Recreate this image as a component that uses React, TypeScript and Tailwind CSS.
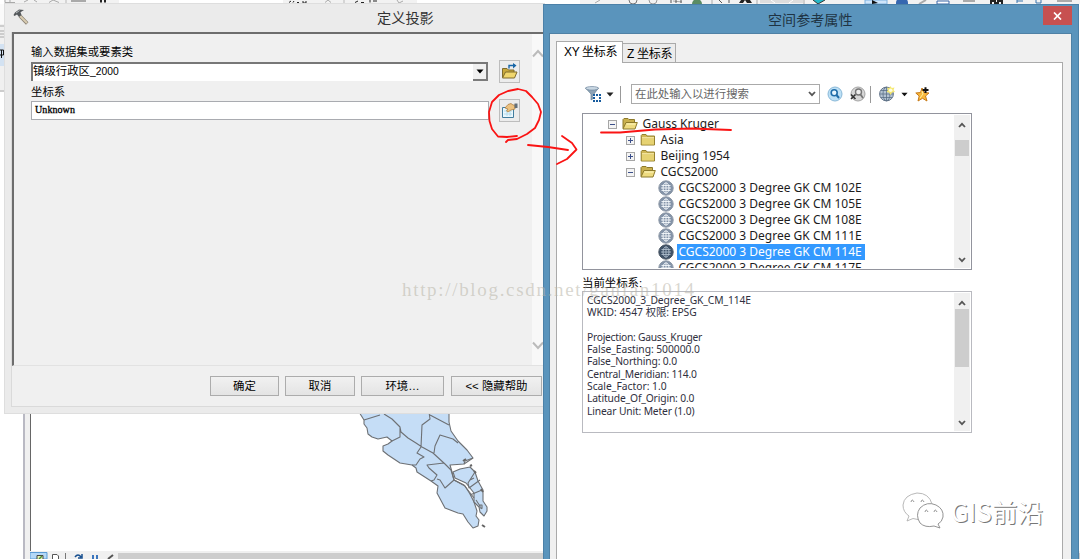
import React from "react";

const Expander = ({ open }: { open: boolean }) => (
  <svg width="9" height="9" viewBox="0 0 9 9" className="shrink-0">
    <rect x="0.5" y="0.5" width="8" height="8" fill="#f4f4f4" stroke="#a6a6a6" />
    <path d={open ? "M2 4.5H7" : "M2 4.5H7M4.5 2V7"} stroke="#3b4f8a" />
  </svg>
);

const Folder = ({ open }: { open: boolean }) => (
  <svg width="16" height="14" viewBox="0 0 16 14" className="shrink-0">
    {open ? (
      <>
        <path d="M1 11.5V2.5L2 1.5H6L7 2.5H12.5V5" fill="#c9b04e" stroke="#8d7a2c" />
        <path d="M1 12L4 5.5H15.3L13 12Z" fill="#eedb80" stroke="#8d7a2c" />
        <path d="M4.5 7H13.5" stroke="#fff7c0" />
      </>
    ) : (
      <>
        <path d="M1.2 12V2.5L2 1.5H6L7 3H14.5V12Z" fill="#cfb654" stroke="#95812f" />
        <path d="M2 5.5H14V11.5H2Z" fill="#e6d272" />
        <path d="M2 4.8H14" stroke="#fff6ba" />
      </>
    )}
  </svg>
);

const Globe = ({ dark }: { dark?: boolean }) => (
  <svg width="16" height="16" viewBox="0 0 16 16" className="shrink-0">
    <circle cx="8" cy="8" r="7.2" fill={dark ? "#3f5268" : "#8393a8"} stroke={dark ? "#4a5663" : "#8d98a6"} />
    <ellipse cx="8" cy="8" rx="3" ry="5.2" fill="none" stroke={dark ? "#aebccb" : "#f3f7fb"} />
    <path d="M8 3V13M3.5 5.5H12.5M3 8H13M3.5 10.5H12.5" stroke={dark ? "#aebccb" : "#f3f7fb"} strokeWidth="0.9" />
  </svg>
);

const Chevron = ({ up }: { up?: boolean }) => (
  <svg width="8" height="6" viewBox="0 0 8 6">
    <path d={up ? "M1 5L4 1.8L7 5" : "M1 1L4 4.2L7 1"} fill="none" stroke="#555" strokeWidth="1.8" />
  </svg>
);

const PushButton = ({ className, children }: { className: string; children: React.ReactNode }) => (
  <button
    className={`h-[20px] shrink-0 border border-[#acacac] bg-linear-to-b from-[#f1f1f1] to-[#e4e4e4] text-center text-[11.4px] leading-[18px] ${className}`}
  >
    {children}
  </button>
);

const names = ["102E", "105E", "108E", "111E", "114E", "117E"];

const Desktop = () => (
  <div className="flex h-full w-full flex-col bg-white">
    <svg width="1080" height="4" viewBox="0 0 1080 4" className="block shrink-0 bg-[#f2f2f2]">
      <path d="M0 0H4V4H0Z" fill="#fff" />
      <path d="M5 0V2.5H15M10 0V2M24 2L28 0M34 0L37 2M49 2.5L53 0L59 2.5" stroke="#a9a9a9" fill="none" />
      <path d="M71 1H86" stroke="#aaa" strokeWidth="2" />
      <path d="M66 0V3M344 0V3" stroke="#b8b8b8" />
      <path d="M101 0V2.5M105 0V2.5" stroke="#222" strokeWidth="2" />
      <path d="M119 0H283V4H119ZM417 0H580V4H417Z" fill="#fff" />
      <path d="M289 2.5L291 1M293 2.5L294 1M297 2.5H299M303 1V3H306V1M355 2.5L358 1M361 2.5H364M370 2.5V0M374 2V0M376 2V0" stroke="#222" fill="none" />
      <path d="M325 2.5L328 0L331 2.5M397 0L399 3L403 1" stroke="#aaa" fill="none" />
      <path d="M595 3L600 0M673 1L682 2" stroke="#aaa" fill="none" />
      <circle cx="633" cy="0" r="4" fill="none" stroke="#777" />
      <circle cx="653" cy="0" r="4" fill="none" stroke="#999" />
      <path d="M671 3V0M676 3V0M681 3V0M719 0L722 3M729 3V0" stroke="#555" />
      <circle cx="697" cy="4" r="5" fill="#5b8c63" />
      <path d="M712 0V4M757 0V4M804 0V4" stroke="#aaa" />
      <path d="M739 3L741 0H750L752 3H747L745 0L743 3Z" fill="#222" />
      <path d="M760 0H803V3H760Z" fill="#ddd" />
      <path d="M771 0L775 3M793 0L789 3" stroke="#fff" />
      <path d="M813 0L818 4L825 0" fill="#25b8c7" stroke="#333" />
      <path d="M865 0H887V4H865Z" fill="#cfe5fa" stroke="#7db2e0" />
      <path d="M872 0V4L878 3Z" fill="#111" />
      <circle cx="902" cy="3" r="6" fill="#3667b0" />
      <path d="M937 1H949V4H937Z" fill="#fff" stroke="#3a66a8" />
      <path d="M919 4L926 0M963 1H975" stroke="#aaa" strokeWidth="2" />
      <path d="M991 4V1H995V3H998V1H1002V4" stroke="#222" strokeWidth="2" fill="none" />
      <path d="M1017 1H1023M1017 0V3M1036 0V3H1041V0" stroke="#3974ad" fill="none" />
      <path d="M1057 1H1072" stroke="#aaa" strokeWidth="2" />
    </svg>
    <div className="flex min-h-0 flex-1">
      <div className="flex w-[23px] flex-col">
        <svg width="4" height="88" viewBox="0 0 4 88" className="block">
          <rect width="4" height="88" fill="#f0f0f0" />
          <path d="M0 0H4V20H0Z" fill="#fafafa" />
          <path d="M0 22H4M0 27H4M0 30H4M0 33H4M0 87H4" stroke="#aaa" />
          <rect y="40" width="4" height="22" fill="#d3e2f2" />
          <path d="M0 46H3.5V51H0M1.5 46V54" stroke="#111" fill="none" />
        </svg>
      </div>
      <div className="w-[2px] bg-[#b9b9c3]" />
      <div className="w-[5px] bg-[#f0f0f0]" />
      <div className="flex flex-1 flex-col">
        <div className="flex flex-1 border-l border-[#666]">
          <svg width="200" height="180" viewBox="330 370 200 180" className="mt-[366px] ml-[299px] block">
            <g fill="#c5ddf6" stroke="#6d7074" strokeWidth="1.1" strokeLinejoin="round">
              <path d="M359 412L364 420L364 424L367 428L368 434L372 437L378 439L387 437L392 441L388 444L383 446L383 451L388 455L400 463L412 465L416 468L417 472L431 481L438 486L437 493L445 508L458 513L463 514L468 522L473 528L478 526L479 520L476 516L477 511L474 502L470 494L465 486L454 480L452 472L450 465L464 464L465 461L473 458L467 450L458 441L451 431L449 422L449 412Z" />
              <path d="M453 472L460 469L470 467L475 472L478 481L483 490L483 501L487 507L487 511L484 516L480 512L479 507L474 502L474 493L466 483L455 478Z" />
              <path d="M364 420L380 415M384 414L392 419L400 427L401 432L408 438L416 443L422 447L433 453L445 464L451 470L454 480M400 427L400 437L392 441M429 412L430 419L422 425L421 447L417 453L424 457L420 459L416 465L412 465M430 415L449 425M434 453L435 446L440 435L453 439L458 443M444 463L427 465L429 468L437 475L434 480L431 481M437 479L440 480L445 488L454 480M475 472L468 483L469 488L480 480M470 495L482 490M470 480L474 478M476 500L482 509M464 464L473 458M454 480L464 485L474 498" fill="none" />
              <path d="M480 505H482V508H480Z" />
            </g>
            <path d="M463 461L466 459M470 466L472 465M474 471L476 473M482 525L485 527M481 489L483 492" stroke="#666" strokeWidth="2" />
          </svg>
        </div>
        <svg width="1050" height="8" viewBox="0 0 1050 8" className="block shrink-0">
          <rect width="1050" height="8" fill="#f0f0f0" />
          <rect x="88" y="2" width="962" height="6" fill="#cdcdcd" />
          <path d="M0 1.500H17V8H0Z" fill="#b4d8f7" stroke="#5b9bd5" />
          <path d="M7 8V4.500H13V8" fill="#e9f2b0" stroke="#444" />
          <path d="M9 8L12 5" stroke="#4a8f3c" strokeWidth="1.500" />
          <path d="M22.500 8V3.500H27L28.500 5V8" fill="#fff" stroke="#555" />
          <path d="M35.500 2V8" stroke="#777" />
          <path d="M45 6Q48 2 51 6M52 3V7H48" stroke="#174f8f" strokeWidth="1.500" fill="none" />
          <path d="M63 4V8M67 4V8" stroke="#3a75bd" strokeWidth="2" />
          <path d="M78 8L83 4" stroke="#555" strokeWidth="2" />
        </svg>
      </div>
    </div>
  </div>
);

const DefineProjection = () => (
  <section className="absolute top-[3px] left-[4px] flex h-[411px] w-[541px] flex-col border border-[#dedede] bg-[#ebebeb]">
    <header className="flex h-[28px] shrink-0 items-center">
      <svg width="18" height="18" viewBox="0 0 18 18" className="-mt-[2px] ml-[7px] shrink-0">
        <path d="M8 8L15.200 15.500" stroke="#8a8274" strokeWidth="3.400" />
        <path d="M8 8L15 15" stroke="#d9ccb0" strokeWidth="2" />
        <path d="M1.500 7L3 4.500L7 1.500L12 2L8.500 4.200L9.500 7L7 9L5 6.500L2.500 8Z" fill="#54585b" />
        <path d="M4 5L7.500 2.600" stroke="#b3b8bb" />
      </svg>
      <h1 className="ml-[347px] text-[14.2px] leading-[20px] text-[#333]">定义投影</h1>
    </header>
    <div className="ml-[6px] flex h-[375px] shrink-0 flex-col border-b border-l border-[#dadada] bg-[#f0f0f0]">
      <div className="flex h-[334px] border-t-2 border-b border-l-2 border-t-[#6d6d6d] border-b-[#e2e2e2] border-l-[#6d6d6d]">
        <div className="flex w-[518px] shrink-0 flex-col pl-[17px]">
          <label className="mt-[10px] text-[11.35px] leading-[16px]">输入数据集或要素类</label>
          <div className="mt-[2px] flex items-center">
            <div className="flex h-[19px] w-[457px] justify-between border-t-2 border-l-2 border-[#777] bg-white">
              <span className="text-[11.4px] leading-[14px]">
                镇级行政区<span className="text-[10.3px]">_2000</span>
              </span>
              <span className="flex h-[17px] w-[15px] items-center justify-center border-r-2 border-b-2 border-[#7b7b7b] bg-[#f0f0f0]">
                <svg width="8" height="5" viewBox="0 0 8 5">
                  <path d="M0.500 0.500H7.500L4 4.500Z" fill="#000" />
                </svg>
              </span>
            </div>
            <span className="-my-[2px] ml-[11px] flex h-[23px] w-[21px] items-center justify-center border border-[#bdbdbd] bg-[#ececec]">
              <svg width="17" height="17" viewBox="0 0 17 17">
                <path d="M1.500 14.500V5.500H6L7.500 7H13V10" fill="#c9a93b" stroke="#7f6b2c" />
                <path d="M1.500 15L4.500 9H16L13.500 15Z" fill="#f0d66d" stroke="#7f6b2c" />
                <path d="M8 5.500V2.500H14" fill="none" stroke="#1765a6" strokeWidth="1.400" />
                <path d="M12 0L15.500 2.500L12 5.500Z" fill="#1765a6" />
              </svg>
            </span>
          </div>
          <label className="mt-[3px] text-[11.4px] leading-[16px]">坐标系</label>
          <div className="mt-[1px] flex items-center">
            <div className="h-[19px] w-[458px] border border-[#a9abb0] bg-white pl-[3px] font-[Liberation_Serif,serif] text-[10px] leading-[16px] tracking-[0.08px] [-webkit-text-stroke:0.3px_#000]">
              Unknown
            </div>
            <span className="-my-[2px] ml-[10px] flex h-[23px] w-[21px] items-center justify-center border border-[#bdbdbd] bg-[#ececec]">
              <svg width="17" height="17" viewBox="0 0 17 17">
                <path d="M1.500 5.500H12.500V15.500H1.500Z" fill="#eaf7fd" stroke="#427d9e" />
                <path d="M3 9H11M3 12H11M6 7V14M9 7V14" stroke="#b4dcec" />
                <path d="M4 6L7 2.500L10 1.500L12 3H14V7L10 8L7 10L5.500 9L7 7Z" fill="#edc27f" stroke="#a87539" strokeWidth="0.700" />
                <path d="M13.500 1.500H16.500V6H13.500Z" fill="#64707a" />
              </svg>
            </span>
          </div>
        </div>
        <div className="flex flex-1 flex-col items-end justify-between bg-[#f8f8f8] pt-[15px] pb-[15px]">
          <svg width="12" height="9" viewBox="0 0 12 9">
            <path d="M1 7.500L6 2L11 7.500" fill="none" stroke="#bbb" strokeWidth="2" />
          </svg>
          <svg width="12" height="9" viewBox="0 0 12 9">
            <path d="M1 1.500L6 7L11 1.500" fill="none" stroke="#bbb" strokeWidth="2" />
          </svg>
        </div>
      </div>
      <div className="flex pt-[10px] pl-[198px]">
        <PushButton className="w-[69px]">确定</PushButton>
        <PushButton className="ml-[6px] w-[70px]">取消</PushButton>
        <PushButton className="ml-[6px] w-[83px]">环境…</PushButton>
        <PushButton className="ml-[7px] w-[91px]">&lt;&lt; 隐藏帮助</PushButton>
      </div>
    </div>
  </section>
);

const TreeRow = ({ level, label, open }: { level: string; label: string; open: boolean }) => (
  <div className={`flex h-[16px] items-center ${level}`}>
    <Expander open={open} />
    <span className="ml-[5px] flex">
      <Folder open={open} />
    </span>
    <span className="ml-[4.500px] leading-[16px]">{label}</span>
  </div>
);

const ScrollBar = ({ top, thumb }: { top: string; thumb: string }) => (
  <div className="flex w-[16px] shrink-0 flex-col items-center bg-[#f0f0f0] pt-[7px] pb-[5px]">
    <Chevron up />
    <div className={`w-[14px] bg-[#cdcdcd] ${top} ${thumb}`} />
    <div className="flex-1" />
    <Chevron />
  </div>
);

const SpatialReference = () => (
  <section className="absolute top-[4px] left-[543px] flex h-[555px] w-[536px] flex-col overflow-hidden border-t border-r border-l border-[#4c81a8] bg-[#5a94bc] pr-[6px] pl-[5px]">
    <header className="flex h-[28px] shrink-0">
      <h2 className="ml-[219px] pt-[5px] text-[14.1px] leading-[20px] text-[#1f3444]">空间参考属性</h2>
      <span className="mt-[1px] mr-0 ml-auto flex h-[19px] w-[29px] items-center justify-center bg-[#c75050]">
        <svg width="9" height="8" viewBox="0 0 9 8">
          <path d="M1 0.500L8 7.500M8 0.500L1 7.500" stroke="#fff" strokeWidth="1.700" />
        </svg>
      </span>
    </header>
    <div className="flex flex-1 flex-col border border-b-0 border-[#4f81a5] bg-[#f0f0f0] pr-[8px] pl-[6px]">
      <div className="z-10 flex h-[28px] shrink-0 items-end">
        <div className="-mb-px h-[22px] w-[67px] border border-b-0 border-[#aaa] bg-white pl-[7px] text-[12px] leading-[20px] tracking-[-0.35px]">
          XY 坐标系
        </div>
        <div className="h-[19px] w-[53px] border border-b-0 border-l-0 border-[#aaa] bg-[#ececec] pl-[4px] text-[12px] leading-[20px] tracking-[-0.3px]">
          Z 坐标系
        </div>
      </div>
      <div className="flex flex-1 flex-col border border-b-0 border-[#aaa] bg-white pl-[25px]">
        <div className="mt-[21px] flex h-[20px] items-center">
          <svg width="17" height="17" viewBox="0 0 17 17" className="ml-[3px]">
            <path d="M0.500 2L6 8V14L9 12V8L13.500 2Z" fill="#8ea3b6" stroke="#667f95" strokeWidth="0.700" />
            <ellipse cx="7" cy="2.300" rx="6.500" ry="1.800" fill="#c9d7e2" stroke="#728aa0" strokeWidth="0.700" />
            <path d="M8 8H16V16H8Z" fill="#fff" />
            <path d="M8 8H10V10H8ZM11 8H13V10H11ZM14 8H16V10H14ZM8 11H10V13H8ZM14 11H16V13H14ZM8 14H10V16H8ZM11 14H13V16H11ZM14 14H16V16H14Z" fill="#165b9e" />
          </svg>
          <svg width="8" height="5" viewBox="0 0 8 5" className="ml-[4px]">
            <path d="M0.500 0.500H7.500L4 4.500Z" fill="#222" />
          </svg>
          <div className="ml-[6px] h-[17px] w-px bg-[#999]" />
          <div className="ml-[10px] flex h-[20px] w-[189px] items-center justify-between border border-[#aaa] pr-[3px] pl-[3px] text-[11.4px] leading-[16px] text-[#666]">
            在此处输入以进行搜索
            <Chevron />
          </div>
          <svg width="16" height="16" viewBox="0 0 16 16" className="ml-[7px]">
            <circle cx="8" cy="8" r="7" fill="#bce0f6" stroke="#8ab9d8" />
            <circle cx="7.200" cy="6.800" r="3" fill="#e6f6ff" stroke="#1f6da9" strokeWidth="1.600" />
            <path d="M9.500 9L12 12" stroke="#1f6da9" strokeWidth="2" />
          </svg>
          <svg width="17" height="16" viewBox="0 0 17 16" className="ml-[6px]">
            <circle cx="9" cy="8" r="7" fill="#d7d7d7" stroke="#a4a4a4" />
            <circle cx="9.500" cy="6" r="3" fill="#eee" stroke="#777" strokeWidth="1.400" />
            <path d="M11.500 8.500L14 12" stroke="#777" strokeWidth="1.800" />
            <path d="M2 8.500L6.500 13M6.500 8.500L2 13" stroke="#333" strokeWidth="1.600" />
          </svg>
          <div className="ml-[4px] h-[17px] w-px bg-[#999]" />
          <svg width="16" height="16" viewBox="0 0 16 16" className="ml-[8px]">
            <circle cx="7.500" cy="8" r="6.900" fill="#b5c4d3" stroke="#66768a" />
            <path d="M7.500 1V15M1 8H14M2 4.500H13M2 11.500H13" stroke="#5a7087" strokeWidth="0.800" />
            <ellipse cx="7.500" cy="8" rx="3.500" ry="6.800" fill="none" stroke="#5a7087" strokeWidth="0.800" />
            <path d="M11.500 0L12.700 2L15.500 1.500L14.500 4L16 6L13 6.500L11.500 9L10 6.500L7.500 6L9 4L8 1.500L10.500 2Z" fill="#f5e86f" />
            <circle cx="11.700" cy="4.200" r="1.800" fill="#fffde0" />
          </svg>
          <svg width="7" height="5" viewBox="0 0 8 5" className="ml-[6px]">
            <path d="M0.500 0.500H7.500L4 4.500Z" fill="#111" />
          </svg>
          <svg width="16" height="16" viewBox="0 0 16 16" className="ml-[7px]">
            <path d="M7 2L9 6.500L14 7L10.500 10L12 15L7.500 12.300L3 15L4.200 10L0.800 7L5.500 6.500Z" fill="#f8b83c" stroke="#c77a18" />
            <path d="M7 5L8 8L5 12" fill="none" stroke="#fff0a0" />
            <path d="M10.500 1.200V7M7.600 4.100H13.500" stroke="#111" strokeWidth="2" />
          </svg>
        </div>
        <div className="mt-[9px] flex h-[157px] w-[390px] shrink-0 overflow-hidden border border-[#92949d] p-px">
          <div className="flex-1 overflow-hidden pt-[1px] font-['Noto_Sans','Open_Sans',sans-serif] text-[12px] text-[#1c1c1c]">
            <TreeRow level="pl-[24px]" label="Gauss Kruger" open />
            <TreeRow level="pl-[42px]" label="Asia" open={false} />
            <TreeRow level="pl-[42px]" label="Beijing 1954" open={false} />
            <TreeRow level="pl-[42px]" label="CGCS2000" open />
            {names.map((n) => (
              <div key={n} className="flex h-[16px] items-center pl-[74px]">
                <Globe dark={n === "114E"} />
                <span
                  className={
                    n === "114E"
                      ? "ml-[3px] h-[16px] w-[188px] bg-[#3399ff] pl-[1.500px] leading-[16px] whitespace-nowrap text-white"
                      : "ml-[4.500px] leading-[16px] whitespace-nowrap"
                  }
                >
                  CGCS2000 3 Degree GK CM {n}
                </span>
              </div>
            ))}
          </div>
          <ScrollBar top="mt-[12px]" thumb="h-[16px]" />
        </div>
        <div className="mt-[5px] h-[16px] text-[11.4px] leading-[16px]">当前坐标系:</div>
        <div className="flex h-[142px] w-[390px] shrink-0 border border-[#b9bac0] p-px">
          <div className="flex-1 pt-[1px] pl-[3px] font-['Noto_Sans','Noto_Sans_CJK_SC',sans-serif] text-[10.3px] leading-[12.3px] whitespace-pre text-[#303040]">
            <p className="h-[12.3px] tracking-[-0.1px]">CGCS2000_3_Degree_GK_CM_114E</p>
            <p className="h-[12.3px]">WKID: 4547 权限: EPSG</p>
            <p className="h-[12.3px]"> </p>
            <p className="h-[12.3px] tracking-[-0.28px]">Projection: Gauss_Kruger</p>
            <p className="h-[12.3px] tracking-[-0.05px]">False_Easting: 500000.0</p>
            <p className="h-[12.3px] tracking-[-0.15px]">False_Northing: 0.0</p>
            <p className="h-[12.3px] tracking-[-0.2px]">Central_Meridian: 114.0</p>
            <p className="h-[12.3px]">Scale_Factor: 1.0</p>
            <p className="h-[12.3px] tracking-[-0.15px]">Latitude_Of_Origin: 0.0</p>
            <p className="h-[12.3px] tracking-[-0.15px]">Linear Unit: Meter (1.0)</p>
          </div>
          <ScrollBar top="mt-[3px]" thumb="h-[58px]" />
        </div>
      </div>
    </div>
  </section>
);

export default function App() {
  return (
    <main className="relative h-[559px] w-[1080px] overflow-hidden bg-white font-['Liberation_Sans','Noto_Sans_CJK_SC',sans-serif] text-black">
      <Desktop />
      <DefineProjection />
      <SpatialReference />
      <span className="absolute top-[278px] left-[402px] font-['Liberation_Serif',serif] text-[19px] leading-[24px] tracking-[1.68px] whitespace-nowrap text-[#b8b5a8]/55">
        http://blog.csdn.net/ganfan1014
      </span>
      <div className="absolute top-[490px] left-[901px] flex items-center">
        <svg width="46" height="42" viewBox="0 0 46 42">
          <g fill="#fff" stroke="#999" strokeWidth="0.900">
            <path d="M8 26L6 31L12 28.500Q18 31 24 28.500Q31 24 31 14Q28 3 16 3Q3 5 2 15Q2 22 8 26Z" stroke="#b0b0b0" />
            <path d="M37 34L39 38L33 36Q24 38 19 33Q14 25 19 18Q26 11 35 15Q43 19 42 27Q41 32 37 34Z" stroke="#888" />
            <path d="M10 12Q11 8 13 12M20 12Q21 8 23 12M24 22Q25 18 27 22M33 22Q34 18 36 22" fill="none" stroke="#888" />
          </g>
        </svg>
        <span className="ml-[4px] font-['Noto_Sans_CJK_SC',sans-serif] text-[25.5px] leading-[36px] tracking-[0.25px] text-white [text-shadow:1px_1px_0_#777]">
          GIS前沿
        </span>
      </div>
      <svg width="260" height="90" viewBox="480 85 260 90" className="pointer-events-none absolute top-[85px] left-[480px]" fill="none" stroke="#fa1414" strokeWidth="1.800" strokeLinecap="round" strokeLinejoin="round">
        <path d="M517 136L507 137L498 136.500L492 129L489.500 121L489 112L492 102L499 95L508 91L518 89L526 91L532 97L538 104L541 112L539 120L535 128L527 134L517 139L508 140L506 142" />
        <path d="M528 145L548 147L568 150M562 136L572 143L576.500 149.500L567 159L557 164" />
        <path d="M601 132.500L620 132.500L655 129.500L692 128.500L731 130" />
      </svg>
    </main>
  );
}
